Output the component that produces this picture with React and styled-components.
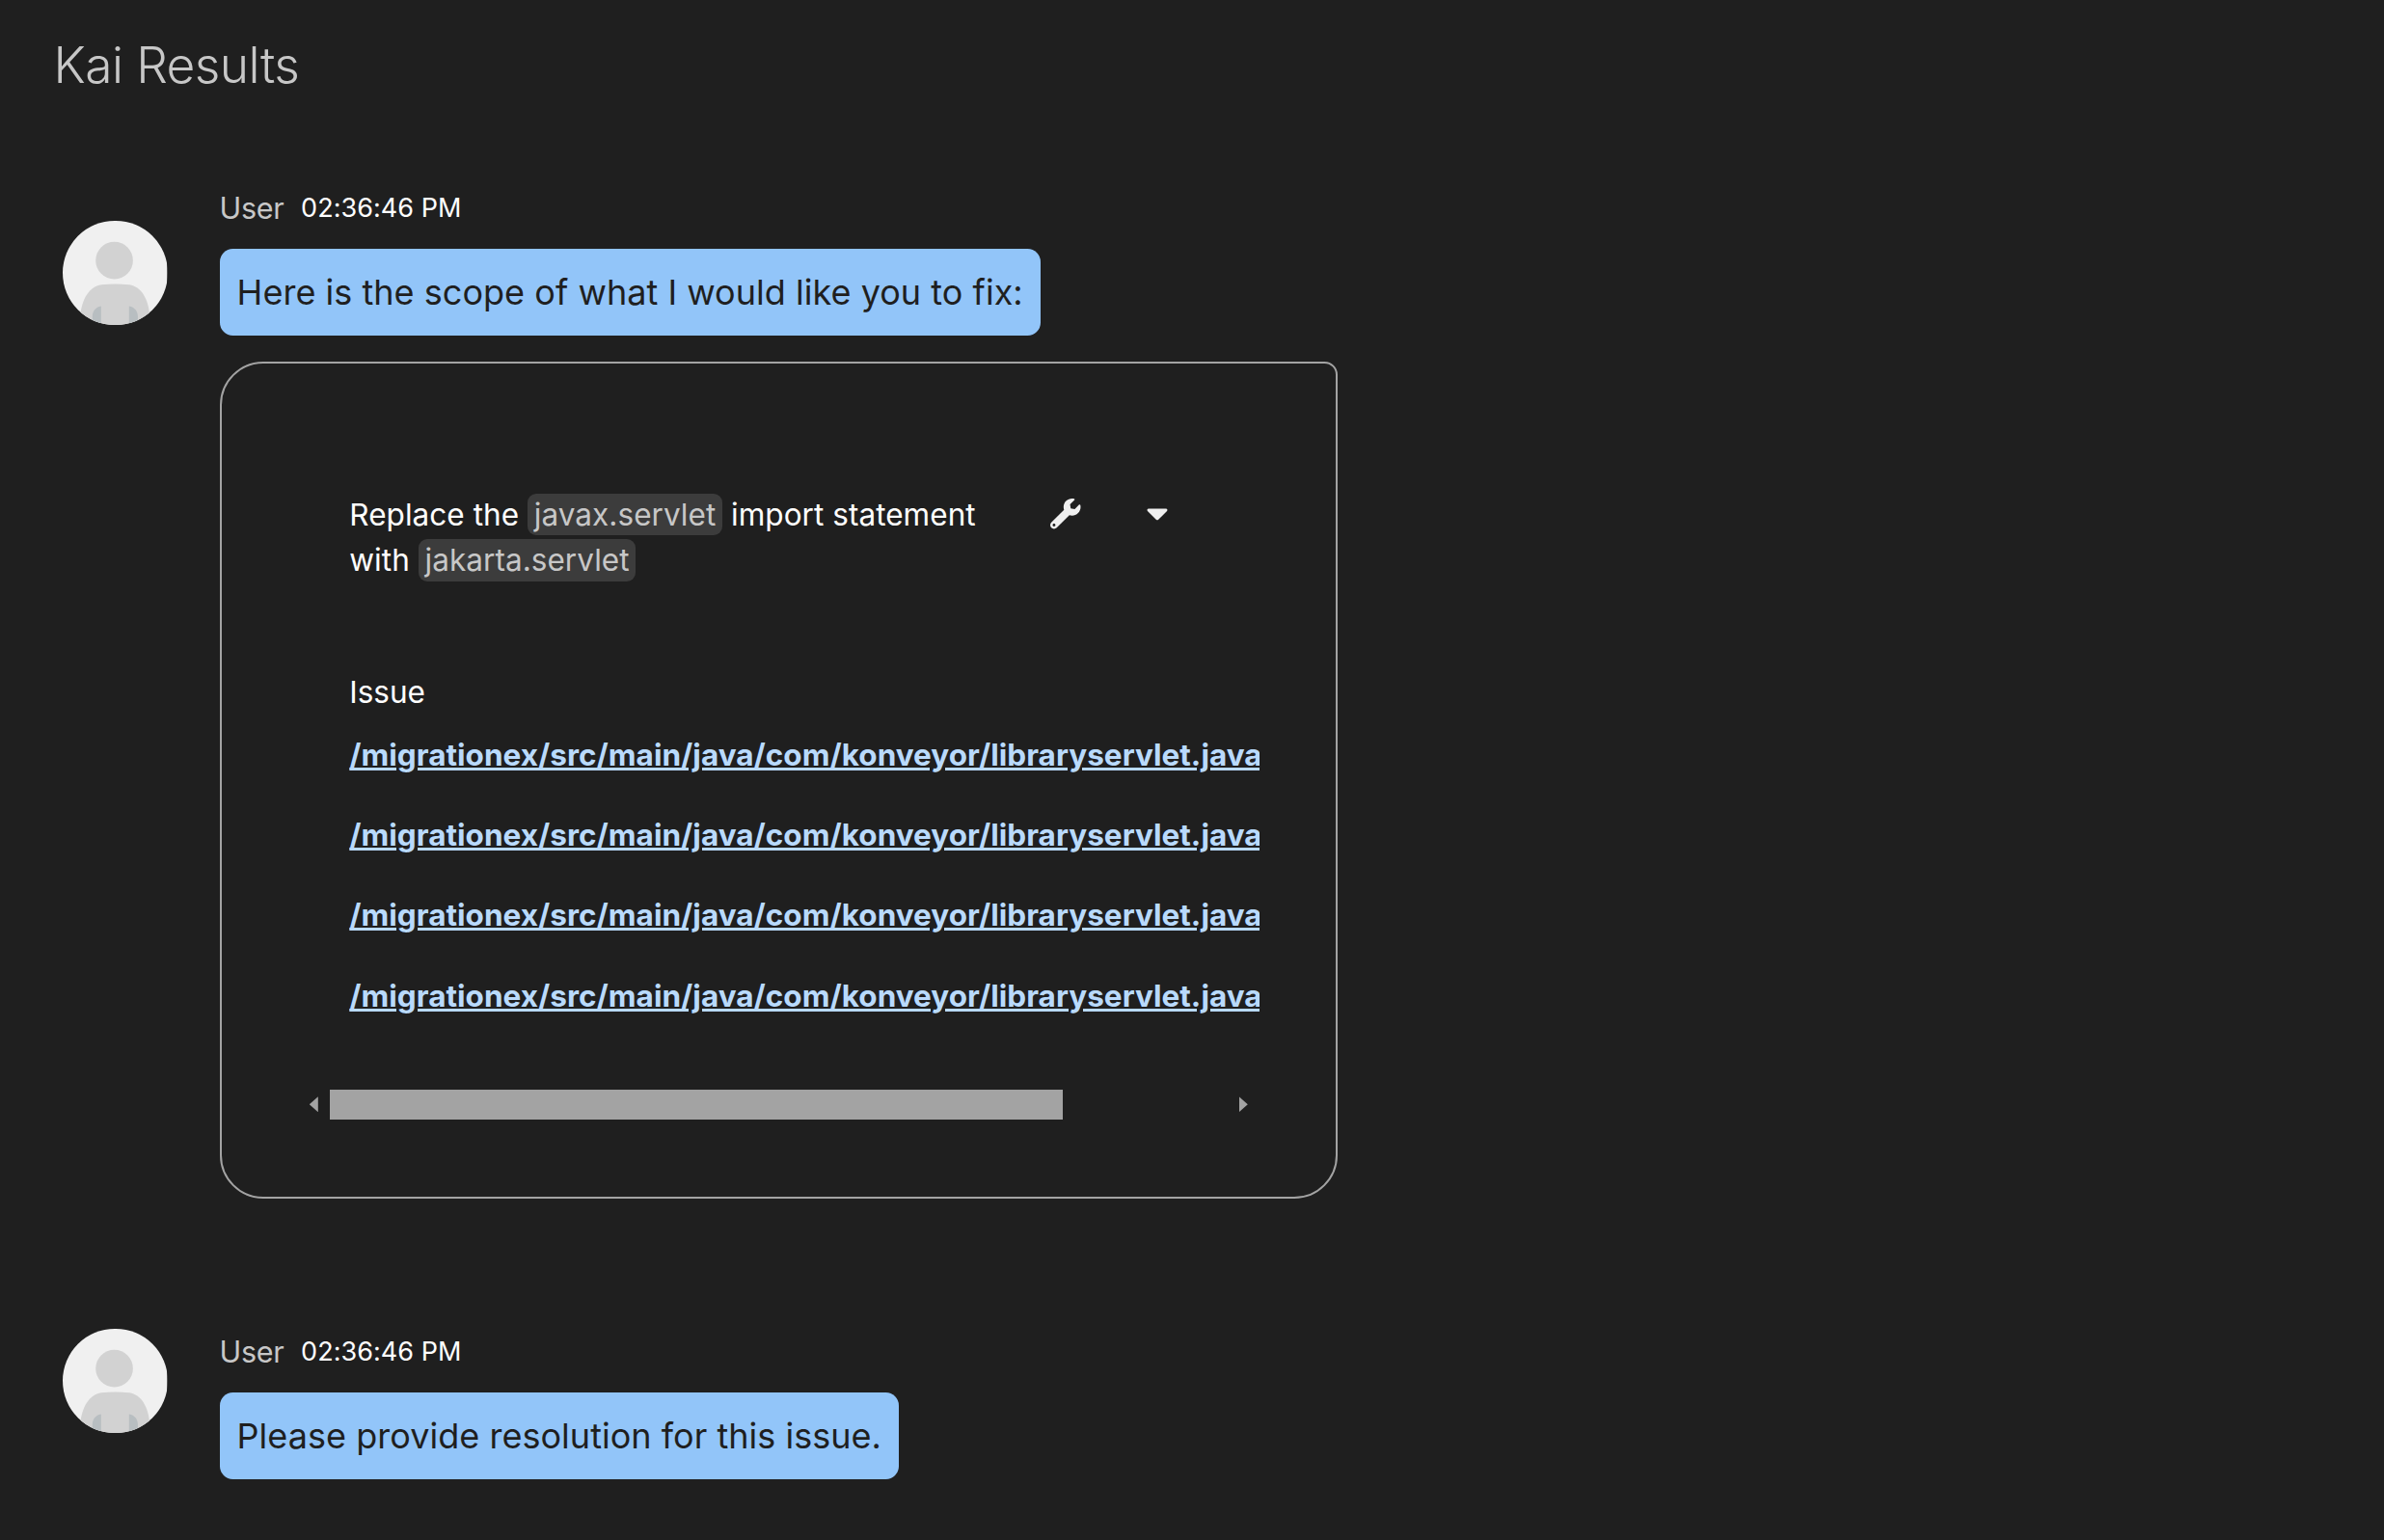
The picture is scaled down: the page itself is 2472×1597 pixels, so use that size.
import React from "react";
import styled, { createGlobalStyle } from "styled-components";
import { FaWrench, FaCaretDown } from "react-icons/fa";

const GlobalStyle = createGlobalStyle`
  *, *::before, *::after { box-sizing: border-box; }
  body {
    margin: 0;
    background: #1f1f1f;
    color: #ffffff;
    font-family: Inter, "Liberation Sans", sans-serif;
    font-size: 31.5px;
    line-height: 1.5;
  }
`;

const Page = styled.main`
  height: 1597px;
  overflow: hidden;
`;

const Title = styled.h1`
  margin: 0;
  padding: 32px 0 0 55.5px;
  height: 195px;
  font-size: 51.5px;
  font-weight: 340;
  line-height: 70px;
  letter-spacing: -0.6px;
  color: #c7c7c7;
`;

const Message = styled.section`
  display: flex;
  align-items: flex-start;
  gap: 54px;
  padding-left: 65.3px;
  margin-bottom: ${(p) => p.$after || 0}px;
`;

const Avatar = styled.svg`
  flex: none;
  width: 108.3px;
  height: 108.3px;
  border-radius: 50%;
  margin-top: ${(p) => p.$offset}px;
`;

const Content = styled.div`
  display: flex;
  flex-direction: column;
  align-items: flex-start;
`;

const Meta = styled.header`
  display: flex;
  align-items: flex-start;
  height: 45px;
  margin-bottom: 18px;
  line-height: 42px;
`;

const Name = styled.span`
  width: 84.5px;
  font-size: 30.5px;
  letter-spacing: -0.3px;
  color: #c7c7c7;
`;

const Time = styled.time`
  font-size: 27px;
  letter-spacing: 0.05px;
`;

const Bubble = styled.p`
  margin: 0;
  padding: 18px;
  border-radius: 13.5px;
  background: #92c5f9;
  color: #1f1f1f;
  font-size: 36px;
  line-height: 54px;
  letter-spacing: 0.03px;
  white-space: nowrap;
`;

const Card = styled.div`
  width: 1159.5px;
  height: 868px;
  margin-top: 27px;
  padding: 133px 79px 0 91.2px;
  border: 2px solid #a3a3a3;
  border-radius: 45px 13.5px 45px 45px;
`;

const IssueHeader = styled.div`
  display: flex;
  align-items: flex-start;
  padding-left: 41.5px;
`;

const Description = styled.div`
  width: 695px;
  line-height: 47.25px;
  letter-spacing: 0.05px;
`;

const Code = styled.code`
  padding: 2.25px 6.75px;
  border-radius: 9px;
  background: #3c3c3c;
  color: #c7c7c7;
  font-family: inherit;
`;

const IconButton = styled.button`
  display: flex;
  align-items: center;
  justify-content: center;
  width: 95px;
  height: ${(p) => p.$height}px;
  padding: 0;
  border: 0;
  background: none;
  color: #f0f0f0;
  font-size: ${(p) => p.$size}px;
`;

const IssueList = styled.div`
  padding: 89px 0 0 41.5px;
`;

const ListTitle = styled.div`
  line-height: 47.25px;
  margin-bottom: 18px;
`;

const FileLink = styled.a`
  display: block;
  width: 943.5px;
  height: 83.25px;
  overflow: hidden;
  color: #b9dafc;
  font-weight: 700;
  line-height: 47.25px;
  letter-spacing: 0.02px;
  text-decoration: underline;
  white-space: nowrap;
`;

const ScrollBar = styled.div`
  display: flex;
  align-items: center;
  height: 31px;
  margin-top: 38px;
  width: 974px;
`;

const Arrow = styled.span`
  width: 9px;
  height: 16px;
  background: #a3a3a3;
  clip-path: ${(p) =>
    p.$right ? "polygon(0 0, 100% 50%, 0 100%)" : "polygon(100% 0, 0 50%, 100% 100%)"};
`;

const Thumb = styled.span`
  width: 760px;
  height: 31px;
  margin: 0 183px 0 12px;
  background: #a3a3a3;
`;

function UserAvatar({ offset }) {
  return (
    <Avatar viewBox="0 0 108 108" $offset={offset}>
      <rect width="108" height="108" fill="#f0f0f0" />
      <circle cx="53.4" cy="41" r="19.3" fill="#d2d2d2" />
      <path
        d="M18 98C20 81 27 68 40 66Q54 64.8 69 66C81 68 88.5 80 90 98V108H18Z"
        fill="#d2d2d2"
      />
      <path d="M39.7 88.3C34 89 30.7 94 30.7 99V108H39.7Z" fill="#b8bec1" />
      <path d="M68.6 88.3C74.5 89 77.7 94 77.7 99V108H68.6Z" fill="#b8bec1" />
    </Avatar>
  );
}

function ChatMessage({ text, offset, after, children }) {
  return (
    <Message $after={after}>
      <UserAvatar offset={offset} />
      <Content>
        <Meta>
          <Name>User</Name>
          <Time>02:36:46 PM</Time>
        </Meta>
        <Bubble>{text}</Bubble>
        {children}
      </Content>
    </Message>
  );
}

const files = Array(4).fill("/migrationex/src/main/java/com/konveyor/libraryservlet.java");

export default function App() {
  return (
    <>
      <GlobalStyle />
      <Page>
        <Title>Kai Results</Title>
        <ChatMessage text="Here is the scope of what I would like you to fix:" offset={33.7} after={137.7}>
          <Card>
            <IssueHeader>
              <Description>
                Replace the <Code>javax.servlet</Code> import statement with{" "}
                <Code>jakarta.servlet</Code>
              </Description>
              <IconButton $size={31.5} $height={46} aria-label="Fix issue">
                <FaWrench />
              </IconButton>
              <IconButton $size={36} $height={44.5} aria-label="More actions">
                <FaCaretDown />
              </IconButton>
            </IssueHeader>
            <IssueList>
              <ListTitle>Issue</ListTitle>
              {files.map((file, i) => (
                <FileLink key={i} href="#">
                  {file}
                </FileLink>
              ))}
            </IssueList>
            <ScrollBar>
              <Arrow />
              <Thumb />
              <Arrow $right />
            </ScrollBar>
          </Card>
        </ChatMessage>
        <ChatMessage text="Please provide resolution for this issue." offset={-2.7} />
      </Page>
    </>
  );
}
